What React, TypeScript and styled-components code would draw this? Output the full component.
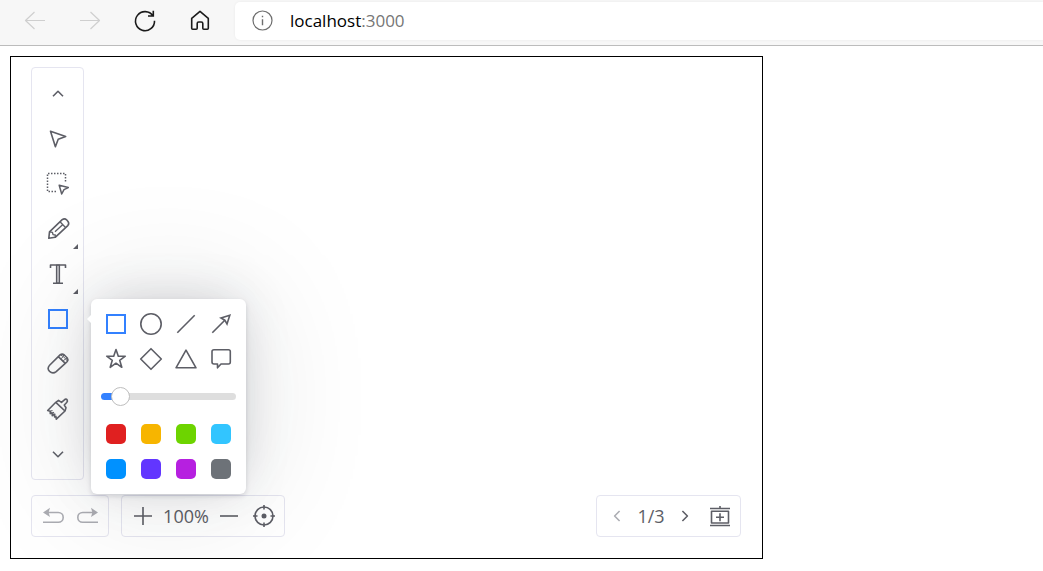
import React, { useState } from "react";
import styled, { createGlobalStyle, css } from "styled-components";

const ink = "#5d5e66";
const blue = "#3381ff";
const line = "#e5e5f0";

const GlobalStyle = createGlobalStyle`
  *, *::before, *::after { box-sizing: border-box; }
  body {
    margin: 0;
    background: #fff;
    font-family: "Open Sans", "Noto Sans", sans-serif;
    overflow-x: hidden;
  }
  button { border: 0; padding: 0; background: none; font: inherit; color: inherit; cursor: pointer; }
  ul { list-style: none; margin: 0; padding: 0; }
`;

const BrowserBar = styled.header`
  display: flex;
  align-items: stretch;
  gap: 15px;
  height: 46px;
  padding: 2px 0 5px 15px;
  background: #f7f7f7;
  border-bottom: 1px solid #bcbcbc;
`;

const NavButton = styled.button`
  display: flex;
  align-items: center;
  justify-content: center;
  width: 40px;
  color: #1b1b1b;
  &:disabled { color: #cfcfcf; cursor: default; }
`;

const AddressBox = styled.div`
  flex: 1;
  display: flex;
  align-items: center;
  gap: 15px;
  padding-left: 16px;
  background: #fff;
  border-radius: 5px 0 0 5px;
  box-shadow: 0 0 3px rgba(0, 0, 0, 0.06);
  color: #6e6e6e;
`;

const Address = styled.a`
  font-size: 17px;
  line-height: 24px;
  color: #000;
  text-decoration: none;
`;

const Port = styled.span`
  color: #767676;
`;

const Board = styled.main`
  display: flex;
  flex-direction: column;
  align-items: flex-start;
  gap: 15px;
  margin: 10px 280px 0 10px;
  padding: 10px 21px 21px 20px;
  border: 1px solid #000;
`;

const panel = css`
  border: 1px solid ${line};
  border-radius: 4px;
  color: ${ink};
`;

const Toolbar = styled.ul`
  ${panel}
  position: relative;
  z-index: 1;
  width: 53px;
  padding: 3px 0;
`;

const ToolItem = styled.li`
  position: relative;
`;

const ToolButton = styled.button<{ $active?: boolean; $more?: boolean }>`
  position: relative;
  display: flex;
  align-items: center;
  justify-content: center;
  width: 100%;
  height: 45px;
  padding: 1px 0 0 1px;
  color: ${(p) => (p.$active ? blue : ink)};
  ${(p) =>
    p.$more &&
    css`
      &::after {
        content: "";
        position: absolute;
        right: 5px;
        bottom: 2px;
        border: solid transparent;
        border-width: 0 0 5px 5px;
        border-bottom-color: ${ink};
      }
    `}
`;

const Popup = styled.div`
  position: absolute;
  left: 59px;
  top: 3px;
  width: 155px;
  padding: 13px 10px;
  background: #fff;
  border-radius: 6px;
  box-shadow:
    0 0 130px rgba(32, 35, 41, 0.13),
    0 -4px 50px -6px rgba(16, 24, 48, 0.17),
    0 2px 5px rgba(16, 24, 48, 0.14);
  &::before {
    content: "";
    position: absolute;
    left: -4px;
    top: 16px;
    border: solid transparent;
    border-width: 4px 4px 4px 0;
    border-right-color: #fff;
  }
`;

const Choices = styled.div`
  display: grid;
  grid-template-columns: repeat(4, 24px);
  gap: 11px;
  justify-content: center;
`;

const ShapeButton = styled.button<{ $active?: boolean }>`
  display: flex;
  width: 24px;
  height: 24px;
  color: ${(p) => (p.$active ? blue : ink)};
`;

const Swatch = styled.button<{ $color: string }>`
  width: 24px;
  height: 24px;
  border: 2px solid transparent;
  border-radius: 7px;
  background: ${(p) => p.$color} padding-box;
`;

const Slider = styled.input`
  appearance: none;
  display: block;
  width: 100%;
  height: 19px;
  margin: 16px 0;
  background: none;
  &::-webkit-slider-runnable-track {
    height: 7px;
    border-radius: 4px;
    background: linear-gradient(to right, ${blue} var(--fill), #dedede var(--fill));
  }
  &::-webkit-slider-thumb {
    appearance: none;
    width: 19px;
    height: 19px;
    margin-top: -6px;
    border: 1px solid #bebebe;
    border-radius: 50%;
    background: #fff;
  }
`;

const BottomRow = styled.div`
  display: flex;
  gap: 12px;
  width: 100%;
`;

const Controls = styled.div<{ $gap: number; $lead: number; $end?: boolean }>`
  ${panel}
  display: flex;
  align-items: center;
  gap: ${(p) => p.$gap}px;
  height: 42px;
  padding: 0 8px 0 ${(p) => p.$lead}px;
  margin-left: ${(p) => (p.$end ? "auto" : 0)};
`;

const IconButton = styled.button<{ $apart?: number }>`
  display: flex;
  margin-left: ${(p) => p.$apart ?? 0}px;
  &:disabled { color: #acadb3; cursor: default; }
`;

const Readout = styled.output<{ $width: number }>`
  width: ${(p) => p.$width}px;
  text-align: center;
  font-size: 18px;
  line-height: 24px;
`;

const Svg = styled.svg`
  display: block;
  flex: none;
  fill: none;
  stroke: currentColor;
  stroke-width: 1.6;
  stroke-linejoin: round;
  overflow: visible;
`;

const Icon = ({ children }: { children: React.ReactNode }) => (
  <Svg width="24" height="24" viewBox="0 0 24 24" aria-hidden="true">
    {children}
  </Svg>
);

const tools = [
  { name: "Scroll up", art: <path d="M7 14.300 12 9.300l5 5" /> },
  { name: "Clicker", art: <path d="M4.500 4.200 19.700 9.600 12.200 12.300 9.400 19.700z" /> },
  {
    name: "Selector",
    art: (
      <>
        <path strokeDasharray="1.500 1.500" strokeWidth="1.500" d="M10 19.500H1.500V1.500H19.500V10.500" />
        <path strokeWidth="1.500" d="M13.200 13.200 22.300 15.600 18 17.600 15.700 22z" />
      </>
    ),
  },
  {
    name: "Pencil",
    more: true,
    art: (
      <>
        <path d="M2.800 21.300 3.500 14.800 16.200 2.600Q18.600.900 20.800 3L22 4.400Q23.500 6.600 21.800 8.600L9.200 20.300z" />
        <path d="M3.500 14.800 6.500 15.300 7 17.700 9.300 18 9.200 20.300M14 4.800 19.500 10.500M9 14.800 16.300 8" strokeWidth="1.300" />
      </>
    ),
  },
  {
    name: "Text",
    more: true,
    art: (
      <>
        <path d="M10.500 3h3v18h-3z" fill="#bcbcc0" strokeWidth="1.200" />
        <path d="M4.500 6V3H19.500V6M7 21.300H17" />
      </>
    ),
  },
  { name: "Shapes", active: true, art: <rect x="3" y="3" width="18" height="18" strokeWidth="2" strokeLinejoin="miter" /> },
  {
    name: "Eraser",
    art: (
      <>
        <path d="M12.300 4.600 3.600 13.200Q.700 16.500 3.600 19.400 6.800 22.400 10.200 19.600L19.300 11.400zM12.300 4.600 14.300 2.700Q16.300 1.500 18.300 3L21.300 6Q22.600 8 21.300 9.500L19.300 11.400" />
        <path d="M14.700 7 17.300 4.500 17.600 2.800M17 9.300 19.500 6.800 21.400 6.500M14.500 3 17.300 4.500 19.500 6.800 21.300 9" strokeWidth="1" />
      </>
    ),
  },
  {
    name: "Clear",
    art: (
      <>
        <path d="M9.800 5.300 12.500 3.300 15.500 5.400 19 2.300Q20.500 1.800 21.300 3.200 21.800 4.500 20.500 5.700L18.300 8 20 10.700 19 14 10.300 22.200 9.900 19.300 8.700 20 8 17 6.300 18.600 6 15.800 4.300 16.600 4.200 14.200 1.700 13.500z" />
        <path d="M9.800 5.300 19 14" />
        <path d="M4.300 14.300 6.500 13.500M6.200 16.200 8 15.200M8.200 17.800 9.500 17" strokeWidth="1.200" />
      </>
    ),
  },
  { name: "Scroll down", art: <path d="M7 9.700 12 14.700l5-5" /> },
];

const shapes = [
  { name: "Rectangle", art: <rect x="3" y="3" width="18" height="18" strokeWidth="2" strokeLinejoin="miter" /> },
  { name: "Ellipse", art: <circle cx="12" cy="12" r="10.200" /> },
  { name: "Straight", art: <path d="M3.300 20.700 20.700 3.300" /> },
  { name: "Arrow", art: <path d="M3.300 20.700 15.800 8.200M20.800 3.200 12 6 15.800 8.200 18 12z" strokeLinejoin="miter" /> },
  {
    name: "Star",
    art: <path d="M12 2.500 14.300 9.200H21.300L15.700 13.300 17.800 20.300 12 16.200 6.200 20.300 8.300 13.300 2.700 9.200H9.700z" />,
  },
  { name: "Rhombus", art: <path d="M12 1.700 22.300 12 12 22.300 1.700 12z" /> },
  { name: "Triangle", art: <path d="M12 3.200 22 20.800H2z" /> },
  {
    name: "Speech balloon",
    art: <path d="M5 2.800H19.500Q21.300 2.800 21.300 4.600V15Q21.300 17 19.500 17H12L8.500 20.800V17H5Q3 17 3 15V4.600Q3 2.800 5 2.800z" />,
  },
];

const colors = ["#e02020", "#f7b500", "#6dd400", "#32c5ff", "#0091ff", "#6236ff", "#b620e0", "#6d7278"];

const undoArt = (
  <>
    <path d="M6 8.500H17.300a4.900 4.900 0 0 1 0 9.800H2" />
    <path d="M2 8.500 9 3.800 7.600 8.500 9 13z" fill="currentColor" stroke="none" />
  </>
);

function ShapePopup() {
  const [size, setSize] = useState(9);
  return (
    <Popup>
      <Choices>
        {shapes.map((s, i) => (
          <ShapeButton key={s.name} $active={i === 0} aria-label={s.name}>
            <Icon>{s.art}</Icon>
          </ShapeButton>
        ))}
      </Choices>
      <Slider
        type="range"
        aria-label="Stroke width"
        min={0}
        max={100}
        value={size}
        onChange={(e) => setSize(Number(e.target.value))}
        style={{ "--fill": `calc(10px + (100% - 19px) * ${size / 100})` } as React.CSSProperties}
      />
      <Choices>
        {colors.map((c) => (
          <Swatch key={c} $color={c} aria-label={`Color ${c}`} />
        ))}
      </Choices>
    </Popup>
  );
}

export default function App() {
  return (
    <>
      <GlobalStyle />
      <BrowserBar>
        <NavButton disabled aria-label="Back">
          <Icon><path strokeWidth="1.200" d="M22 11.500H2.500M11.500 3 2.500 11.500 11.500 20" /></Icon>
        </NavButton>
        <NavButton disabled aria-label="Forward">
          <Icon><path strokeWidth="1.200" d="M2 11.500H21.500M12.500 3 21.500 11.500 12.500 20" /></Icon>
        </NavButton>
        <NavButton aria-label="Reload">
          <Icon><path strokeLinejoin="miter" d="M20.300 1.700V7H15M20 7A9.500 9.500 0 1 0 21.500 11.700" /></Icon>
        </NavButton>
        <NavButton aria-label="Home">
          <Icon>
            <path d="M3.700 9.400 12 2.300 20.300 9.400V19.200Q20.300 20.200 19.300 20.200H15.800Q14.800 20.200 14.800 19.200V14.500Q14.800 13 13.300 13H10.700Q9.200 13 9.200 14.500V19.200Q9.200 20.200 8.200 20.200H4.700Q3.700 20.200 3.700 19.200z" />
          </Icon>
        </NavButton>
        <AddressBox>
          <Icon>
            <circle cx="11.500" cy="11.500" r="9.500" strokeWidth="1.200" />
            <path d="M11.500 10.300V16.300M11.500 6.800V8.300" strokeWidth="1.400" />
          </Icon>
          <Address href="#">localhost<Port>:3000</Port></Address>
        </AddressBox>
      </BrowserBar>
      <Board>
        <Toolbar>
          {tools.map((t) => (
            <ToolItem key={t.name}>
              <ToolButton $active={t.active} $more={t.more} aria-label={t.name}>
                <Icon>{t.art}</Icon>
              </ToolButton>
              {t.active && <ShapePopup />}
            </ToolItem>
          ))}
        </Toolbar>
        <BottomRow>
          <Controls $gap={11} $lead={9}>
            <IconButton disabled aria-label="Undo"><Icon>{undoArt}</Icon></IconButton>
            <IconButton disabled aria-label="Redo">
              <Icon><g transform="matrix(-1 0 0 1 24 0)">{undoArt}</g></Icon>
            </IconButton>
          </Controls>
          <Controls $gap={6} $lead={9}>
            <IconButton aria-label="Zoom in"><Icon><path d="M3 12H21M12 3V21" /></Icon></IconButton>
            <Readout $width={50}>100%</Readout>
            <IconButton aria-label="Zoom out"><Icon><path d="M3 12H21" /></Icon></IconButton>
            <IconButton $apart={5} aria-label="Reset view">
              <Icon>
                <circle cx="12" cy="12" r="9" />
                <circle cx="12" cy="12" r="2.500" fill="currentColor" stroke="none" />
                <path d="M12 1V5.500M12 18.500V23M1 12H5.500M18.500 12H23" />
              </Icon>
            </IconButton>
          </Controls>
          <Controls $gap={0} $lead={8} $end>
            <IconButton disabled aria-label="Previous page"><Icon><path d="M14.600 7 9.600 12l5 5" /></Icon></IconButton>
            <Readout $width={44}>1/3</Readout>
            <IconButton aria-label="Next page"><Icon><path d="M9.400 7 14.400 12l-5 5" /></Icon></IconButton>
            <IconButton $apart={11} aria-label="Add page">
              <Icon>
                <path d="M2 4.500H22M2 21.500H22M12 2V4.500M12 9.300V17.300M8 13.300H16" />
                <rect x="3.500" y="7.300" width="17" height="11.700" />
              </Icon>
            </IconButton>
          </Controls>
        </BottomRow>
      </Board>
    </>
  );
}
